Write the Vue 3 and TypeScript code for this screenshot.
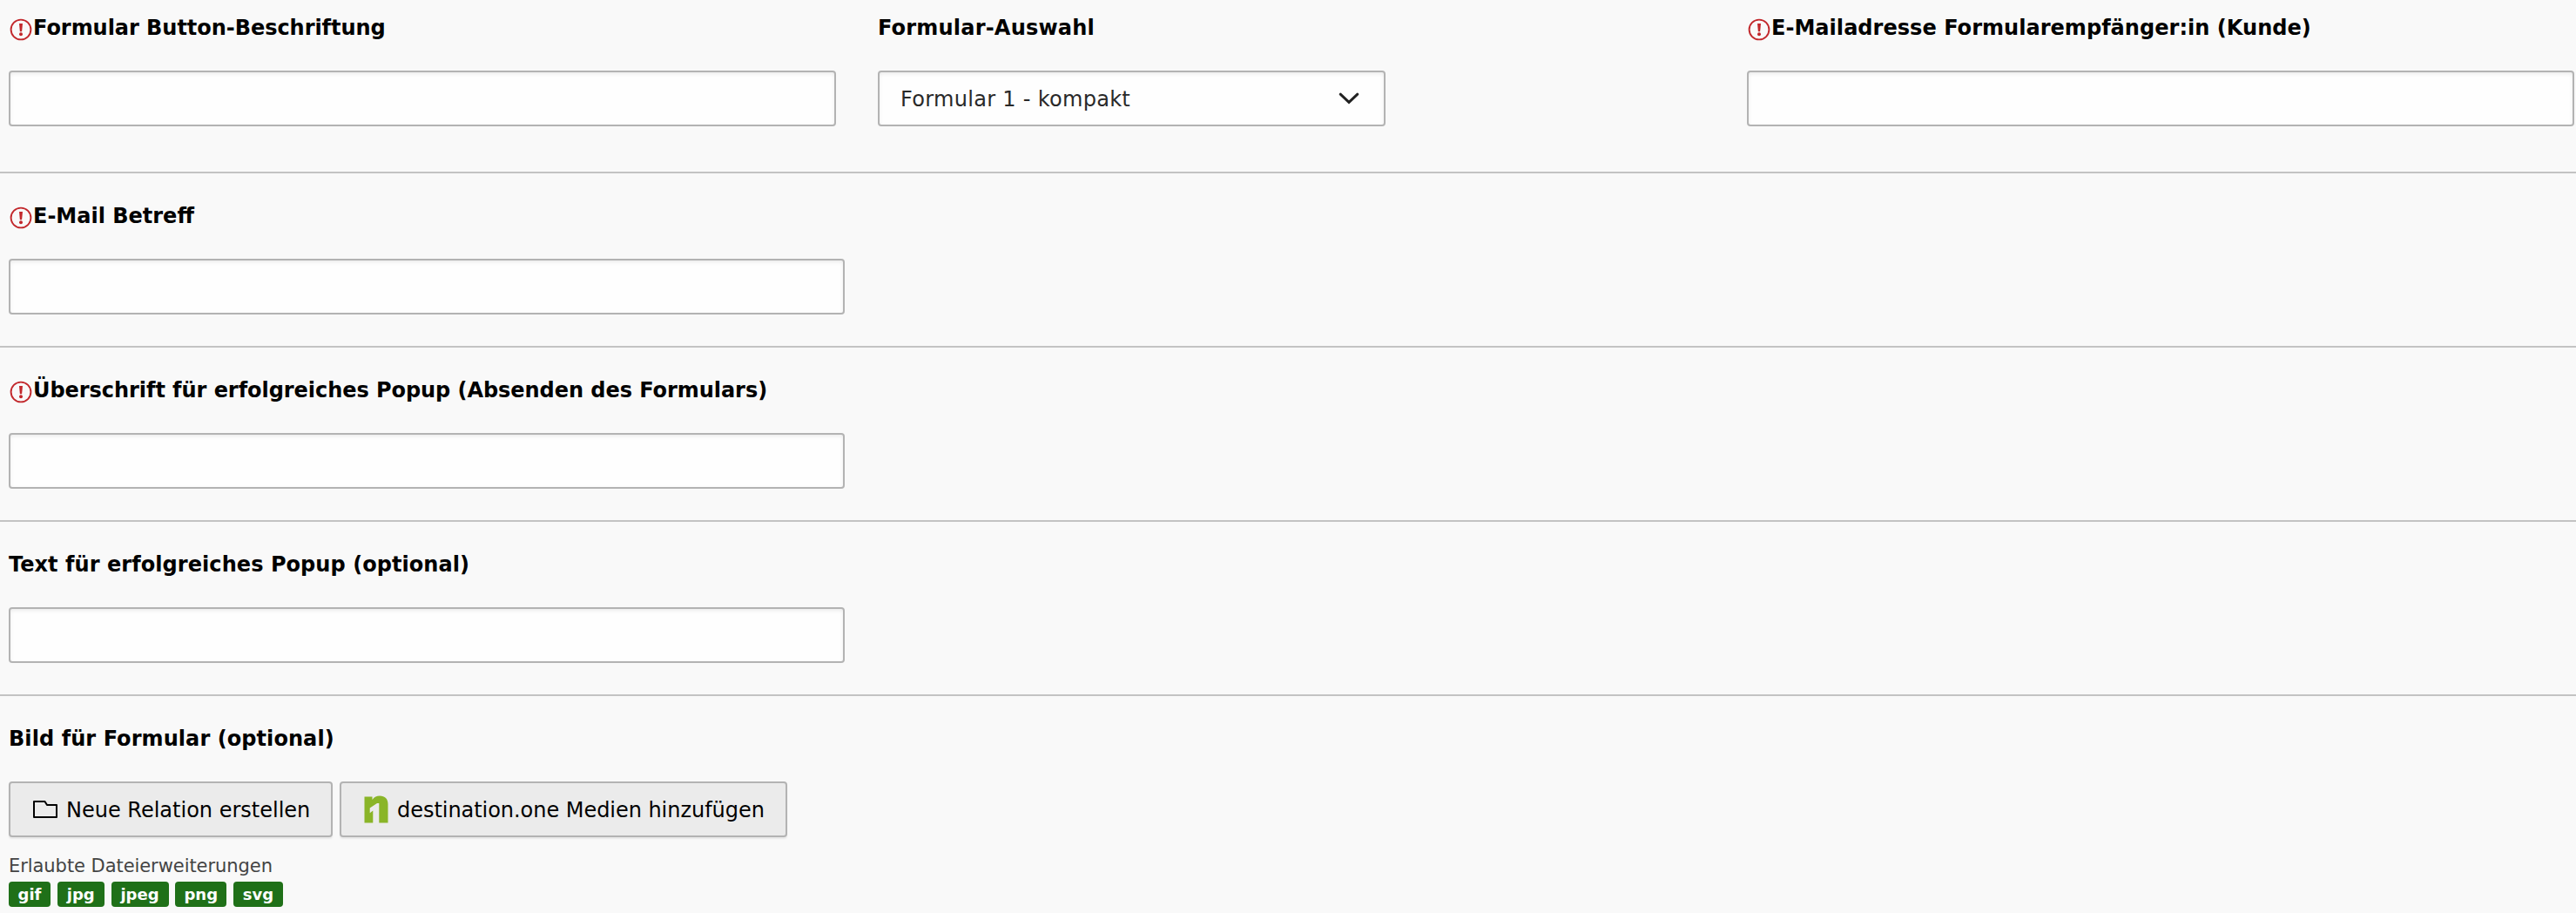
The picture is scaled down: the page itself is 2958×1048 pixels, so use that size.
<script setup lang="ts">
interface Field {
  label: string
  required: boolean
  spacing: number
}

const rows: Field[] = [
  { label: 'E-Mail Betreff', required: true, spacing: 0 },
  { label: 'Überschrift für erfolgreiches Popup (Absenden des Formulars)', required: true, spacing: -0.05 },
  { label: 'Text für erfolgreiches Popup (optional)', required: false, spacing: 0.06 },
]

const top: (Field & { value?: string })[] = [
  { label: 'Formular Button-Beschriftung', required: true, spacing: -0.04 },
  { label: 'Formular-Auswahl', required: false, spacing: 0.2, value: 'Formular 1 - kompakt' },
  { label: 'E-Mailadresse Formularempfänger:in (Kunde)', required: true, spacing: 0.04 },
]

const extensions: { name: string; width: number }[] = [
  { name: 'gif', width: 48 },
  { name: 'jpg', width: 54 },
  { name: 'jpeg', width: 66 },
  { name: 'png', width: 59 },
  { name: 'svg', width: 57 },
]
</script>

<template>
  <main class="form">
    <section class="row row-top">
      <div v-for="f in top" :key="f.label" class="col">
        <label class="label">
          <svg v-if="f.required" class="req" viewBox="0 0 28 28">
            <circle cx="14" cy="14" r="11.4" fill="none" stroke="#c2282c" stroke-width="1.9" />
            <path d="M12 7h4l-.9 9.2h-2.2z" fill="#c2282c" />
            <circle cx="14" cy="19.3" r="2" fill="#c2282c" />
          </svg>
          <span :style="{ letterSpacing: f.spacing + 'px' }">{{ f.label }}</span>
        </label>
        <div v-if="f.value" class="input select">
          <span>{{ f.value }}</span>
          <svg class="chevron" viewBox="0 0 24 14">
            <path d="M2.2 2.2 12 11.4 21.8 2.2" fill="none" stroke="#222" stroke-width="3" stroke-linecap="round" />
          </svg>
        </div>
        <input v-else class="input" type="text" />
      </div>
    </section>

    <section v-for="f in rows" :key="f.label" class="row">
      <label class="label">
        <svg v-if="f.required" class="req" viewBox="0 0 28 28">
          <circle cx="14" cy="14" r="11.4" fill="none" stroke="#c2282c" stroke-width="1.9" />
          <path d="M12 7h4l-.9 9.2h-2.2z" fill="#c2282c" />
          <circle cx="14" cy="19.3" r="2" fill="#c2282c" />
        </svg>
        <span :style="{ letterSpacing: f.spacing + 'px' }">{{ f.label }}</span>
      </label>
      <input class="input wide" type="text" />
    </section>

    <section class="row row-last">
      <label class="label"><span class="image-label">Bild für Formular (optional)</span></label>
      <div class="buttons">
        <button class="btn btn-new" type="button">
          <svg class="folder" viewBox="0 0 28 20">
            <path d="M1 19V1h12.5l2.5 4h11v14z" fill="none" stroke="#000" stroke-width="2" stroke-linejoin="round" />
          </svg>
          <span>Neue Relation erstellen</span>
        </button>
        <button class="btn btn-media" type="button">
          <svg class="brand" viewBox="0 0 28 32">
            <path
              d="M.5 1.5H9.5V5C12 1.5 14.5.5 18 .5C24 .5 27.500 4 27.500 10V31.500H17.300V9H15L6.700 14.500V20.300L10.300 17.500V31.500H.5z"
              fill="#8ab528"
            />
          </svg>
          <span>destination.one Medien hinzufügen</span>
        </button>
      </div>
      <div class="help">Erlaubte Dateierweiterungen</div>
      <div class="badges">
        <span v-for="e in extensions" :key="e.name" class="badge" :style="{ width: e.width + 'px' }">{{ e.name }}</span>
      </div>
    </section>
  </main>
</template>

<style>
body {
  background: #f9f9f9;
  overflow: hidden;
}
</style>

<style scoped>
.form {
  box-sizing: border-box;
  height: 1048px;
  overflow: hidden;
  background: #f9f9f9;
  color: #000;
  font-family: Verdana, 'DejaVu Sans', sans-serif;
  font-size: 24px;
}
.row {
  box-sizing: border-box;
  height: 200px;
  padding: 32px 0 0 10px;
  border-bottom: 2px solid #c3c3c3;
}
.row-top {
  display: grid;
  grid-template-columns: 950px 950px 950px;
  column-gap: 48px;
  height: 199px;
  padding-top: 15px;
}
.row-last {
  height: 249px;
  border-bottom: 0;
}
.label {
  display: flex;
  height: 32px;
  margin-bottom: 34px;
  line-height: 34px;
  font-weight: 700;
  white-space: nowrap;
}
.image-label {
  letter-spacing: 0.07px;
}
.req {
  flex: none;
  width: 28px;
  height: 28px;
  margin: 5px 0 0;
}
.input {
  display: block;
  box-sizing: border-box;
  width: 100%;
  height: 64px;
  padding: 0 24px;
  border: 2px solid #b3b3b3;
  border-radius: 4px;
  background: #fefefe;
  box-shadow: inset 0 2px 4px rgba(0, 0, 0, 0.075);
  outline: none;
}
.wide {
  width: 960px;
}
.select {
  display: flex;
  align-items: center;
  justify-content: space-between;
  width: 583px;
  padding-right: 28px;
  color: #292929;
  letter-spacing: 0.3px;
  white-space: nowrap;
}
.select span,
.btn span {
  padding-top: 2px;
}
.chevron {
  width: 24px;
  height: 14px;
}
.buttons {
  display: flex;
  gap: 8px;
}
.btn {
  display: flex;
  align-items: center;
  box-sizing: border-box;
  height: 64px;
  padding: 0 0 0 26px;
  border: 2px solid #b3b3b3;
  border-radius: 4px;
  background: #ebebeb;
  box-shadow: 0 2px 2px rgba(0, 0, 0, 0.07);
  color: #000;
  font: inherit;
  white-space: nowrap;
}
.btn-new {
  width: 372px;
}
.btn-media {
  width: 514px;
  letter-spacing: -0.04px;
}
.folder {
  width: 28px;
  height: 20px;
  margin-right: 10px;
}
.brand {
  width: 28px;
  height: 32px;
  margin-right: 10px;
}
.help {
  height: 30px;
  margin-top: 18px;
  line-height: 30px;
  font-size: 21px;
  letter-spacing: -0.06px;
  color: #444;
}
.badges {
  display: flex;
  gap: 7.75px;
  margin-top: 3px;
}
.badge {
  height: 29px;
  border-radius: 4px;
  background: #1f7018;
  color: #fff;
  font-size: 18px;
  font-weight: 700;
  line-height: 30px;
  text-align: center;
}
</style>
